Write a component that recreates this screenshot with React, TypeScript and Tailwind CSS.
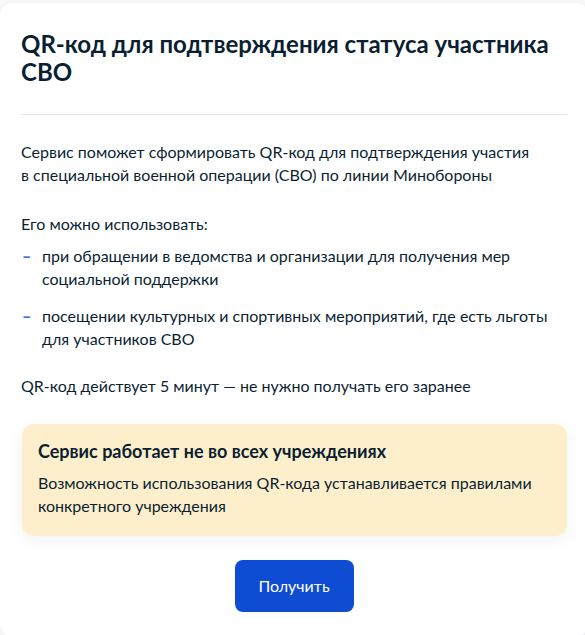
const items = [
  'при обращении в ведомства и организации для получения мер социальной поддержки',
  'посещении культурных и спортивных мероприятий, где есть льготы для участников СВО',
];

export default function App() {
  return (
    <div className="min-h-[635px] overflow-hidden bg-[#f8f9fb] pt-[3px] font-['Lato','Noto_Sans',sans-serif] text-[#0b1f33]">
      <div className="w-[588px] rounded-[12px] bg-white px-[21px] pt-[27px] pb-[24px] shadow-[0_2px_10px_rgba(11,31,51,0.06)]">
        <h1 className="text-[24px] font-bold leading-[28px]">
          QR-код для подтверждения статуса участника СВО
        </h1>
        <div className="mt-[28px] border-t border-[#e1e4e8]" />

        <p className="mt-[25px] text-[16px] leading-[23px]">
          Сервис поможет сформировать QR-код для подтверждения участия
          <br />
          в специальной военной операции (СВО) по линии Минобороны
        </p>

        <p className="mt-[26px] text-[16px] leading-[23px]">Его можно использовать:</p>
        <ul className="mt-[9px] flex flex-col gap-[14px]">
          {items.map((text) => (
            <li key={text} className="flex text-[16px] leading-[23px]">
              <span className="w-[21px] shrink-0 pl-[1px] font-black text-[#3f72d9]">–</span>
              <span>{text}</span>
            </li>
          ))}
        </ul>

        <p className="mt-[24px] text-[16px] leading-[23px]">
          QR-код действует 5 минут — не нужно получать его заранее
        </p>

        <div className="mt-[27px] ml-[1px] rounded-[12px] bg-[#fdefcb] px-[16px] pt-[15px] pb-[19px] shadow-[0_4px_16px_rgba(11,31,51,0.06)]">
          <div className="text-[18px] font-bold leading-[24px]">Сервис работает не во всех учреждениях</div>
          <p className="mt-[8px] text-[16px] leading-[23px]">
            Возможность использования QR-кода устанавливается правилами конкретного учреждения
          </p>
        </div>

        <div className="mt-[24px] flex justify-center">
          <button className="h-[52px] w-[119px] rounded-[8px] bg-[#0d4cd3] text-[16px] leading-none text-white">
            Получить
          </button>
        </div>
      </div>
    </div>
  );
}
